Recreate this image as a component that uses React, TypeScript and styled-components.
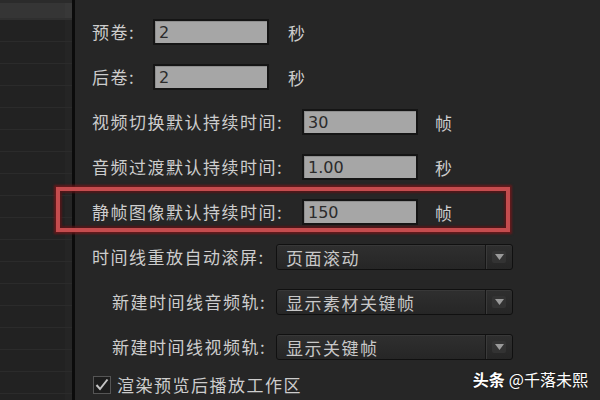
import React from "react";
import styled, { createGlobalStyle } from "styled-components";

const GlobalStyle = createGlobalStyle`
  html, body { margin: 0; padding: 0; background: #262626; }
  body { font-family: "Noto Sans CJK SC", "Noto Sans", sans-serif; }
  * { box-sizing: border-box; }
`;

const Screen = styled.div`
  position: relative;
  display: flex;
  width: 600px;
  height: 400px;
  overflow: hidden;
  background: #262626;
`;

const Sidebar = styled.div`
  width: 75px;
  flex: none;
  display: flex;
  flex-direction: column;
  background: #222222;
  border-right: 3px solid #0b0b0b;
  box-shadow: inset -7px 0 0 #252525;
`;

const SidebarHeader = styled.div`
  height: 20px;
  flex: none;
  background: #353535;
  border-top: 3px solid #2b2b2b;
  border-bottom: 2px solid #2f2f2f;
  box-shadow: inset -7px 0 0 #383838;
`;

const SidebarRow = styled.div`
  height: 22px;
  flex: none;
  border-bottom: 1px solid #2b2b2b;
`;

const Main = styled.div`
  flex: 1;
  display: flex;
  flex-direction: column;
  padding: 19px 0 0 17px;
  color: #cdcdcd;
  font-size: 17px;
  letter-spacing: 1.5px;
`;

const Row = styled.div<{ $indent?: number; $gap?: number }>`
  position: relative;
  display: flex;
  align-items: center;
  height: 26px;
  margin-left: ${(p) => p.$indent ?? 0}px;
  margin-bottom: ${(p) => p.$gap ?? 19}px;
  white-space: nowrap;
`;

const Label = styled.span<{ $w: number }>`
  width: ${(p) => p.$w}px;
  flex: none;
  line-height: 26px;
`;

const Field = styled.div`
  width: 116px;
  height: 26px;
  flex: none;
  display: flex;
  align-items: center;
  padding-left: 4px;
  background: #a6a6a6;
  border: 2px solid #151515;
  box-shadow: inset 1px 1px 0 #8e8e8e;
  color: #2b2b2b;
  font-family: "DejaVu Sans", "Liberation Sans", sans-serif;
  font-size: 16px;
  letter-spacing: 0;
`;

const Unit = styled.span<{ $ml: number }>`
  margin-left: ${(p) => p.$ml}px;
`;

const Select = styled.div`
  width: 237px;
  height: 26px;
  flex: none;
  display: flex;
  align-items: center;
  background: linear-gradient(#2f2f2f, #262626);
  border: 1px solid #101010;
  border-radius: 3px;
  box-shadow: inset 0 1px 0 #383838;
  color: #c8c8c8;
`;

const SelectText = styled.span`
  flex: 1;
  padding-left: 9px;
`;

const SelectButton = styled.div`
  width: 27px;
  height: 100%;
  display: flex;
  align-items: center;
  justify-content: center;
  border-left: 1px solid #151515;
  box-shadow: inset 1px 0 0 #3a3a3a;
`;

const ArrowChip = styled.div`
  width: 14px;
  height: 12px;
  display: flex;
  align-items: center;
  justify-content: center;
  border-radius: 2px;
  background: #333333;
`;

const Highlight = styled.div`
  position: absolute;
  left: -36px;
  top: -12px;
  width: 454px;
  height: 45px;
  border: 4px solid #c44c4e;
  box-shadow: 0 0 2px 2px rgba(110, 24, 26, 0.85), inset 0 0 2px 2px rgba(90, 20, 22, 0.8);
  pointer-events: none;
`;

const CheckRow = styled.div`
  display: flex;
  align-items: center;
  gap: 6px;
  margin-top: -7px;
  margin-left: 1px;
  white-space: nowrap;
`;

const CheckBox = styled.div`
  width: 18px;
  height: 18px;
  flex: none;
  display: flex;
  align-items: center;
  justify-content: center;
  background: #1d1d1d;
  border: 1px solid #555555;
`;

const Watermark = styled.div`
  position: absolute;
  right: 12px;
  bottom: 9px;
  color: #ffffff;
  font-size: 16px;
  letter-spacing: 0;
  text-shadow: 0 0 2px rgba(0, 0, 0, 0.6);
  white-space: nowrap;
`;

const Brand = styled.b`
  font-weight: 700;
  margin-right: 4px;
`;

const Arrow = () => (
  <ArrowChip>
    <svg width="9" height="6" viewBox="0 0 9 6">
      <path d="M0 0 H9 L4.5 6 Z" fill="#9a9a9a" />
    </svg>
  </ArrowChip>
);

const Dropdown = ({ value }: { value: string }) => (
  <Select>
    <SelectText>{value}</SelectText>
    <SelectButton>
      <Arrow />
    </SelectButton>
  </Select>
);

export default function App() {
  return (
    <Screen>
      <GlobalStyle />
      <Sidebar>
        <SidebarHeader />
        {Array.from({ length: 18 }).map((_, i) => (
          <SidebarRow key={i} />
        ))}
      </Sidebar>
      <Main>
        <Row>
          <Label $w={61}>预卷:</Label>
          <Field>2</Field>
          <Unit $ml={19}>秒</Unit>
        </Row>
        <Row>
          <Label $w={61}>后卷:</Label>
          <Field>2</Field>
          <Unit $ml={19}>秒</Unit>
        </Row>
        <Row>
          <Label $w={210}>视频切换默认持续时间:</Label>
          <Field>30</Field>
          <Unit $ml={17}>帧</Unit>
        </Row>
        <Row>
          <Label $w={210}>音频过渡默认持续时间:</Label>
          <Field>1.00</Field>
          <Unit $ml={17}>秒</Unit>
        </Row>
        <Row>
          <Label $w={210}>静帧图像默认持续时间:</Label>
          <Field>150</Field>
          <Unit $ml={17}>帧</Unit>
          <Highlight />
        </Row>
        <Row>
          <Label $w={184}>时间线重放自动滚屏:</Label>
          <Dropdown value="页面滚动" />
        </Row>
        <Row $indent={20}>
          <Label $w={164}>新建时间线音频轨:</Label>
          <Dropdown value="显示素材关键帧" />
        </Row>
        <Row $indent={20}>
          <Label $w={164}>新建时间线视频轨:</Label>
          <Dropdown value="显示关键帧" />
        </Row>
        <CheckRow>
          <CheckBox>
            <svg width="14" height="13" viewBox="0 0 14 13">
              <path d="M1.5 7 L5 11 L12.5 1.5" fill="none" stroke="#c4c4c4" strokeWidth="2" />
            </svg>
          </CheckBox>
          <span>渲染预览后播放工作区</span>
        </CheckRow>
      </Main>
      <Watermark>
        <Brand>头条</Brand>@千落未熙
      </Watermark>
    </Screen>
  );
}
